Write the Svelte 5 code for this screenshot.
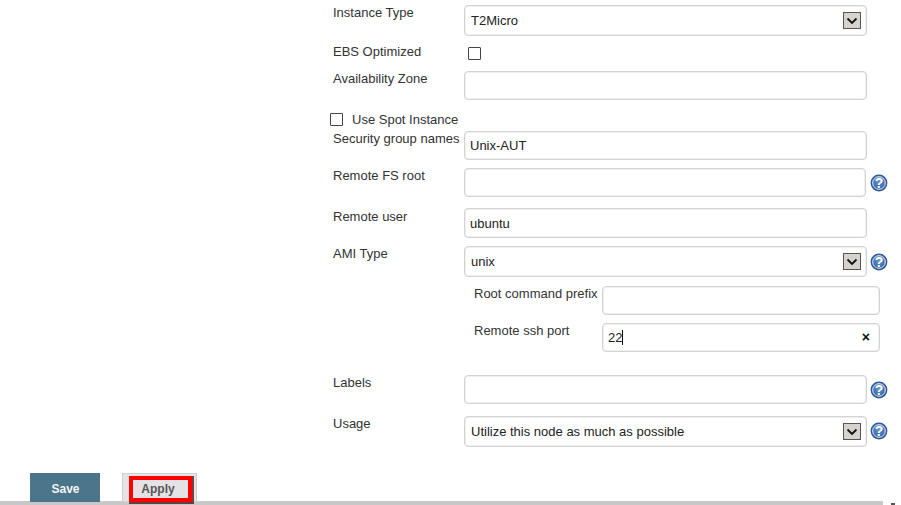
<script>
  const usage = "Utilize this node as much as possible";
</script>

{#snippet help()}
  <svg class="help" width="18" height="18" viewBox="0 0 18 18" aria-hidden="true">
    <defs>
      <radialGradient id="hg" cx="50%" cy="40%" r="60%">
        <stop offset="0" stop-color="#6f97cc" />
        <stop offset="0.7" stop-color="#3c6cb0" />
        <stop offset="1" stop-color="#1f4a8c" />
      </radialGradient>
    </defs>
    <circle cx="9" cy="9" r="7.8" fill="url(#hg)" stroke="#2a5696" stroke-width="1.2" />
    <circle cx="9" cy="9" r="6.3" fill="none" stroke="#e6edf6" stroke-width="1" />
    <text x="9" y="13.6" text-anchor="middle" class="q">?</text>
  </svg>
{/snippet}

{#snippet select(text)}
  <div class="select">
    <span>{text}</span>
    <span class="arrow">
      <svg width="12" height="8" viewBox="0 0 12 8" aria-hidden="true"><path d="M1.5 1.5 6 6l4.5-4.5" fill="none" stroke="#111" stroke-width="1.8" /></svg>
    </span>
  </div>
{/snippet}

<div class="page">
  <form class="form">
    <div class="row r1"><div class="label">Instance Type</div>{@render select("T2Micro")}</div>
    <div class="row r2"><div class="label">EBS Optimized</div><span class="check ebs"></span></div>
    <div class="row r3"><div class="label">Availability Zone</div><input class="input" /></div>
    <div class="spot"><span class="check"></span><span>Use Spot Instance</span></div>
    <div class="row r5"><div class="label">Security group names</div><input class="input" value="Unix-AUT" /></div>
    <div class="row r6"><div class="label">Remote FS root</div><input class="input short" />{@render help()}</div>
    <div class="row r7"><div class="label">Remote user</div><input class="input" value="ubuntu" /></div>
    <div class="row r8"><div class="label">AMI Type</div>{@render select("unix")}{@render help()}</div>
    <div class="sub">
      <div class="row r9"><div class="label sublabel">Root command prefix</div><input class="input wide" /></div>
      <div class="row r10">
        <div class="label sublabel">Remote ssh port</div>
        <div class="port"><span class="val">22</span><span class="caret"></span><span class="clear">×</span></div>
      </div>
    </div>
    <div class="row r11"><div class="label">Labels</div><input class="input" />{@render help()}</div>
    <div class="row r12"><div class="label">Usage</div>{@render select(usage)}{@render help()}</div>
  </form>
  <div class="actions">
    <button class="save" type="button">Save</button>
    <div class="applywrap"><button class="apply" type="button">Apply</button></div>
  </div>
  <div class="scroll"></div>
  <div class="scrollmark"></div>
</div>

<style>
  :global(body) { margin: 0; background: #fff; }
  .page {
    width: 901px; height: 505px; overflow: hidden; position: relative;
    font-family: "Liberation Sans", Arial, sans-serif; font-size: 13px; color: #333;
  }
  .form { padding: 5px 34px 0 333px; }
  .row { display: flex; align-items: flex-start; }
  .label { width: 131px; flex: none; line-height: 15px; color: #333; }
  .input, .select, .port {
    box-sizing: border-box; height: 29px; width: 403px; border: 1px solid #d2d2d2;
    box-shadow: inset 0 0 0 1px #f0f0f0;
    border-radius: 4px; background: #fff; padding: 0 5px; flex: none;
    font: 13px "Liberation Sans", Arial, sans-serif; color: #222; outline: none;
  }
  .select { height: 31px; display: flex; align-items: center; justify-content: space-between; padding: 0 5px 0 6px; }
  .arrow {
    box-sizing: border-box; width: 18px; height: 17px; border: 1px solid #555; background: #d6d3ce;
    display: flex; align-items: center; justify-content: center;
  }
  .short { width: 402px; }
  .help { flex: none; margin: 6px 0 0 3px; }
  .r6 .help { margin-left: 4px; }
  .q { font: bold 14px "Liberation Sans", Arial, sans-serif; fill: #fff; }
  .check { display: block; box-sizing: border-box; width: 13px; height: 13px; border: 1px solid #444; background: #fff; border-radius: 1px; }
  .ebs { margin-left: 4px; }

  .r2 { margin-top: 11px; }
  .r2 .label { margin-top: -3px; }
  .r3 { margin-top: 11px; }
  .spot { display: flex; align-items: center; gap: 9px; margin: 12px 0 0 -3px; height: 15px; }
  .r5 { margin-top: 4px; }
  .r6 { margin-top: 8px; }
  .r7 { margin-top: 11px; }
  .r7 .label { padding-top: 1px; }
  .r7 .input { height: 30px; }
  .r8 { margin-top: 8px; }
  .r8 .help { margin-top: 7px; }
  .sub { padding-left: 141px; }
  .sublabel { width: 128px; }
  .wide, .port { width: 278px; }
  .r9 { margin-top: 9px; }
  .r10 { margin-top: 8px; }
  .port { position: relative; display: flex; align-items: center; padding-left: 5px; }
  .caret { display: block; width: 1px; height: 15px; background: #111; }
  .clear { position: absolute; right: 9px; top: 4px; font-size: 14px; line-height: 18px; color: #111; font-weight: bold; }
  .r11 { margin-top: 23px; }
  .r12 { margin-top: 12px; }

  .actions { position: relative; z-index: 1; display: flex; align-items: flex-start; padding: 26px 0 0 30px; gap: 22px; }
  .save {
    box-sizing: border-box; width: 70px; height: 29px; border: 1px solid #4b758b; background: #4b758b; color: #f4f4f4;
    font: bold 12px "Liberation Sans", Arial, sans-serif; padding: 2px 0 0 1px;
  }
  .applywrap {
    box-sizing: border-box; width: 75px; height: 29px; background: #e5e3e5; border: 1px solid #cfcfcf;
    padding: 2px 0 0 6px;
  }
  .apply {
    display: block; box-sizing: border-box; width: 63px; height: 26px; background: #e4e2e4; color: #555;
    border: 4px solid #f00; box-shadow: 1px 1px 0 1px rgba(70, 16, 16, 0.75);
    font: bold 12px "Liberation Sans", Arial, sans-serif; padding: 0 5px 0 0;
  }
  .scroll { position: absolute; left: 0; right: 18px; top: 501px; height: 4px; background: #c8c8c8; }
  .scrollmark { position: absolute; left: 891px; top: 503px; width: 4px; height: 2px; background: #555; }
</style>
